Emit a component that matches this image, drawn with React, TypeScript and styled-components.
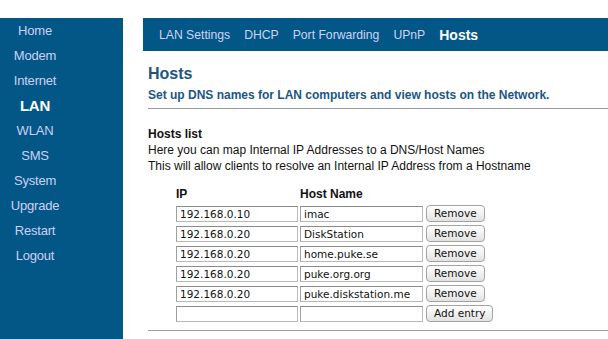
import React from 'react';
import styled, { createGlobalStyle } from 'styled-components';

const GlobalStyle = createGlobalStyle`
  html, body {
    margin: 0;
    padding: 0;
    background: #ffffff;
  }
  body {
    font-family: 'Liberation Sans', Arial, sans-serif;
    color: #1a1a1a;
  }
`;

const sideItems = ['Home', 'Modem', 'Internet', 'LAN', 'WLAN', 'SMS', 'System', 'Upgrade', 'Restart', 'Logout'];
const tabs = ['LAN Settings', 'DHCP', 'Port Forwarding', 'UPnP', 'Hosts'];
const hosts = [
  { ip: '192.168.0.10', name: 'imac' },
  { ip: '192.168.0.20', name: 'DiskStation' },
  { ip: '192.168.0.20', name: 'home.puke.se' },
  { ip: '192.168.0.20', name: 'puke.org.org' },
  { ip: '192.168.0.20', name: 'puke.diskstation.me' },
];

export default function App(): JSX.Element {
  return (
    <>
      <GlobalStyle />
      <Page>
        <Sidebar>
          <SideList>
            {sideItems.map((item) => (
              <SideItem key={item} $active={item === 'LAN'}>
                {item}
              </SideItem>
            ))}
          </SideList>
        </Sidebar>
        <Main>
          <TabBar>
            {tabs.map((tab) => (
              <Tab key={tab} $active={tab === 'Hosts'}>
                {tab}
              </Tab>
            ))}
          </TabBar>
          <Content>
            <Title>Hosts</Title>
            <Subtitle>Set up DNS names for LAN computers and view hosts on the Network.</Subtitle>
            <Rule />
            <Section>
              <SectionTitle>Hosts list</SectionTitle>
              <Text>Here you can map Internal IP Addresses to a DNS/Host Names</Text>
              <Text>This will allow clients to resolve an Internal IP Address from a Hostname</Text>
            </Section>
            <HostTable>
              <ColHead>IP</ColHead>
              <ColHead>Host Name</ColHead>
              <span />
              {hosts.map((h, i) => (
                <React.Fragment key={i}>
                  <Field defaultValue={h.ip} />
                  <Field defaultValue={h.name} />
                  <Button>Remove</Button>
                </React.Fragment>
              ))}
              <Field defaultValue="" />
              <Field defaultValue="" />
              <Button>Add entry</Button>
            </HostTable>
            <BottomRule />
          </Content>
        </Main>
      </Page>
    </>
  );
}

const Page = styled.div`
  display: flex;
  padding-top: 18px;
  gap: 20px;
  height: 339px;
  box-sizing: border-box;
  overflow: hidden;
`;

const Sidebar = styled.nav`
  width: 123px;
  flex-shrink: 0;
  background: #035786;
`;

const SideList = styled.ul`
  list-style: none;
  margin: 0;
  padding: 0;
  width: 70px;
`;

const SideItem = styled.li<{ $active?: boolean }>`
  line-height: 25px;
  height: 25px;
  text-align: center;
  font-size: ${({ $active }) => ($active ? '15px' : '13px')};
  font-weight: ${({ $active }) => ($active ? 700 : 400)};
  color: ${({ $active }) => ($active ? '#ffffff' : '#cdd0f4')};
  letter-spacing: -0.2px;
`;

const Main = styled.div`
  flex: 1;
  display: flex;
  flex-direction: column;
`;

const TabBar = styled.div`
  height: 33px;
  background: #035786;
  display: flex;
  align-items: center;
  padding-left: 16px;
  gap: 14px;
`;

const Tab = styled.span<{ $active?: boolean }>`
  font-size: ${({ $active }) => ($active ? '14px' : '12.2px')};
  font-weight: ${({ $active }) => ($active ? 700 : 400)};
  color: ${({ $active }) => ($active ? '#ffffff' : '#cdd3f4')};
`;

const Content = styled.div`
  padding-left: 5px;
`;

const Title = styled.h1`
  margin: 13px 0 0;
  font-size: 16px;
  line-height: 20px;
  font-weight: 700;
  color: #1b5686;
`;

const Subtitle = styled.p`
  margin: 4px 0 0;
  font-size: 12px;
  line-height: 15px;
  font-weight: 700;
  color: #1b5686;
`;

const Rule = styled.div`
  margin-top: 5px;
  border-top: 1px solid #9a9a9a;
`;

const Section = styled.div`
  margin-top: 17px;
`;

const SectionTitle = styled.div`
  font-size: 12px;
  line-height: 16px;
  font-weight: 700;
  color: #111;
`;

const Text = styled.div`
  font-size: 12px;
  line-height: 16px;
  color: #111;
`;

const HostTable = styled.div`
  margin-top: 16px;
  margin-left: 28px;
  display: grid;
  grid-template-columns: 122px 123px auto;
  column-gap: 2px;
  row-gap: 3px;
  align-items: end;
  justify-items: start;
`;

const ColHead = styled.div`
  font-size: 12px;
  line-height: 14px;
  font-weight: 700;
  color: #111;
  margin-bottom: 1px;
  margin-top: -3px;
`;

const Field = styled.input`
  box-sizing: border-box;
  width: 100%;
  height: 16px;
  margin: 0;
  padding: 0 3px;
  font-family: 'DejaVu Sans', 'Liberation Sans', sans-serif;
  font-size: 10.5px;
  color: #111;
  border: 1px solid #b8b8b8;
  border-top-color: #8a8a8a;
  border-left-color: #a0a0a0;
  background: #fff;
  outline: none;
`;

const Button = styled.button`
  box-sizing: border-box;
  height: 17px;
  margin: 0 0 0 1px;
  padding: 0 7px;
  font-family: 'DejaVu Sans', 'Liberation Sans', sans-serif;
  font-size: 10.5px;
  line-height: 15px;
  color: #111;
  border: 1px solid #a3a3a3;
  border-radius: 4px;
  background: linear-gradient(#ffffff, #f1f1f1 50%, #e2e2e2);
`;

const BottomRule = styled.div`
  margin-top: 8px;
  border-top: 1px solid #9a9a9a;
`;
